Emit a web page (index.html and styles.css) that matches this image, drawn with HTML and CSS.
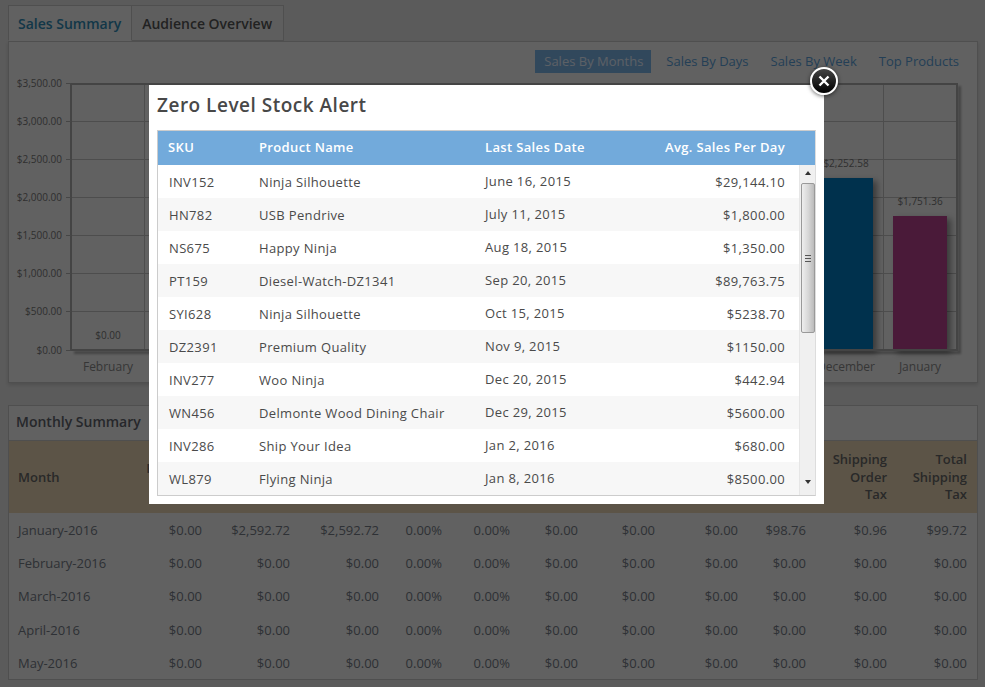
FILE: index.html
```html
<!DOCTYPE html>
<html lang="en">
<head>
    <meta charset="UTF-8">
    <meta name="viewport" content="width=device-width, initial-scale=1.0">
    <title>Sales Dashboard</title>
    <link rel="stylesheet" href="styles.css">
</head>
<body>
    <!-- Tabs -->
    <ul class="tabs">
        <li class="tab active">Sales Summary</li>
        <li class="tab">Audience Overview</li>
    </ul>

    <!-- Chart panel -->
    <section class="chart-panel">
        <nav class="chart-nav">
            <a class="chart-link active">Sales By Months</a>
            <a class="chart-link">Sales By Days</a>
            <a class="chart-link">Sales By Week</a>
            <a class="chart-link">Top Products</a>
        </nav>
        <svg class="chart" viewBox="9 74 968 308" width="968" height="308">
            <g class="grid">
                <path d="M71 121.5H957M71 159.5H957M71 197.5H957M71 235.5H957M71 273.5H957M71 311.5H957"/>
                <path d="M144.5 83V350M218.5 83V350M292.5 83V350M366.5 83V350M440.5 83V350M514.5 83V350M587.5 83V350M661.5 83V350M735.5 83V350M809.5 83V350M883.5 83V350"/>
            </g>
            <rect class="bar bar-blue" x="819" y="178" width="54" height="172"/>
            <rect class="bar bar-purple" x="893" y="216" width="54" height="134"/>
            <path class="axis-shadow" d="M959.5 86V352.5H74"/>
            <path class="axis" d="M71 350V84H957V350Z"/>
            <path class="ticks" d="M66 83.5H71M66 121.5H71M66 159.5H71M66 197.5H71M66 235.5H71M66 273.5H71M66 311.5H71M66 350.5H71"/>
            <g class="y-labels">
                <text x="62" y="87">$3,500.00</text>
                <text x="62" y="125">$3,000.00</text>
                <text x="62" y="163">$2,500.00</text>
                <text x="62" y="201">$2,000.00</text>
                <text x="62" y="239">$1,500.00</text>
                <text x="62" y="277">$1,000.00</text>
                <text x="62" y="315">$500.00</text>
                <text x="62" y="354">$0.00</text>
            </g>
            <g class="bar-labels">
                <text x="108" y="339">$0.00</text>
                <text x="846" y="167">$2,252.58</text>
                <text x="920" y="205">$1,751.36</text>
            </g>
            <g class="x-labels">
                <text x="108" y="371">February</text>
                <text x="846" y="371">December</text>
                <text x="920" y="371">January</text>
            </g>
        </svg>
    </section>

    <!-- Monthly summary -->
    <section class="summary-panel">
        <h2 class="summary-title">Monthly Summary</h2>
        <table class="summary-table">
            <colgroup>
                <col class="col-month"><col class="col-a"><col class="col-b"><col class="col-b2">
                <col class="col-pct"><col class="col-c"><col class="col-c"><col class="col-d">
                <col class="col-e"><col class="col-c"><col class="col-f"><col class="col-g">
            </colgroup>
            <thead>
                <tr>
                    <th class="left">Month</th>
                    <th>Products<br>Sold</th>
                    <th></th><th></th><th></th><th></th><th></th><th></th><th></th><th></th>
                    <th>Shipping<br>Order<br>Tax</th>
                    <th>Total<br>Shipping<br>Tax</th>
                </tr>
            </thead>
            <tbody>
                <tr><td class="left">January-2016</td><td>$0.00</td><td>$2,592.72</td><td>$2,592.72</td><td>0.00%</td><td>0.00%</td><td>$0.00</td><td>$0.00</td><td>$0.00</td><td>$98.76</td><td>$0.96</td><td>$99.72</td></tr>
                <tr><td class="left">February-2016</td><td>$0.00</td><td>$0.00</td><td>$0.00</td><td>0.00%</td><td>0.00%</td><td>$0.00</td><td>$0.00</td><td>$0.00</td><td>$0.00</td><td>$0.00</td><td>$0.00</td></tr>
                <tr><td class="left">March-2016</td><td>$0.00</td><td>$0.00</td><td>$0.00</td><td>0.00%</td><td>0.00%</td><td>$0.00</td><td>$0.00</td><td>$0.00</td><td>$0.00</td><td>$0.00</td><td>$0.00</td></tr>
                <tr><td class="left">April-2016</td><td>$0.00</td><td>$0.00</td><td>$0.00</td><td>0.00%</td><td>0.00%</td><td>$0.00</td><td>$0.00</td><td>$0.00</td><td>$0.00</td><td>$0.00</td><td>$0.00</td></tr>
                <tr class="last-row"><td class="left">May-2016</td><td>$0.00</td><td>$0.00</td><td>$0.00</td><td>0.00%</td><td>0.00%</td><td>$0.00</td><td>$0.00</td><td>$0.00</td><td>$0.00</td><td>$0.00</td><td>$0.00</td></tr>
            </tbody>
        </table>
    </section>

    <!-- Dimmed backdrop and modal -->
    <div class="overlay"></div>
    <div class="modal">
        <button class="modal-close" aria-label="Close">
            <svg viewBox="0 0 12 12" width="12" height="12"><path d="M1.5 1.5L10.5 10.5M10.5 1.5L1.5 10.5"/></svg>
        </button>
        <h3 class="modal-title">Zero Level Stock Alert</h3>
        <div class="stock-box">
            <table class="stock-table stock-head">
                <thead>
                    <tr>
                        <th class="col-sku">SKU</th>
                        <th class="col-name">Product Name</th>
                        <th class="col-date">Last Sales Date</th>
                        <th class="col-avg">Avg. Sales Per Day</th>
                    </tr>
                </thead>
            </table>
            <div class="stock-body">
                <table class="stock-table">
                    <tbody>
                        <tr><td class="col-sku">INV152</td><td class="col-name">Ninja Silhouette</td><td class="col-date">June 16, 2015</td><td class="col-avg">$29,144.10</td></tr>
                        <tr><td class="col-sku">HN782</td><td class="col-name">USB Pendrive</td><td class="col-date">July 11, 2015</td><td class="col-avg">$1,800.00</td></tr>
                        <tr><td class="col-sku">NS675</td><td class="col-name">Happy Ninja</td><td class="col-date">Aug 18, 2015</td><td class="col-avg">$1,350.00</td></tr>
                        <tr><td class="col-sku">PT159</td><td class="col-name">Diesel-Watch-DZ1341</td><td class="col-date">Sep 20, 2015</td><td class="col-avg">$89,763.75</td></tr>
                        <tr><td class="col-sku">SYI628</td><td class="col-name">Ninja Silhouette</td><td class="col-date">Oct 15, 2015</td><td class="col-avg">$5238.70</td></tr>
                        <tr><td class="col-sku">DZ2391</td><td class="col-name">Premium Quality</td><td class="col-date">Nov 9, 2015</td><td class="col-avg">$1150.00</td></tr>
                        <tr><td class="col-sku">INV277</td><td class="col-name">Woo Ninja</td><td class="col-date">Dec 20, 2015</td><td class="col-avg">$442.94</td></tr>
                        <tr><td class="col-sku">WN456</td><td class="col-name">Delmonte Wood Dining Chair</td><td class="col-date">Dec 29, 2015</td><td class="col-avg">$5600.00</td></tr>
                        <tr><td class="col-sku">INV286</td><td class="col-name">Ship Your Idea</td><td class="col-date">Jan 2, 2016</td><td class="col-avg">$680.00</td></tr>
                        <tr><td class="col-sku">WL879</td><td class="col-name">Flying Ninja</td><td class="col-date">Jan 8, 2016</td><td class="col-avg">$8500.00</td></tr>
                    </tbody>
                </table>
                <div class="scrollbar">
                    <span class="arrow arrow-up"></span>
                    <div class="thumb"><span class="grip"></span></div>
                    <span class="arrow arrow-down"></span>
                </div>
            </div>
        </div>
    </div>
</body>
</html>
```

FILE: styles.css
```css
/* Page */
html, body {
    height: 687px;
    overflow: hidden;
}

body {
    margin: 0;
    padding: 5px 7px 0 8px;
    background-color: #e4e4e4;
    font-family: "Open Sans", sans-serif;
    color: #333;
}

/* Tabs */
.tabs {
    display: flex;
    list-style: none;
    margin: 0;
    padding: 0;
    height: 36px;
}

.tab {
    padding: 0 11px 0 10px;
    border: 1px solid #c6c6c6;
    border-left: none;
    font-size: 14px;
    font-weight: 600;
    line-height: 36px;
    color: #555;
    background-color: #ececec;
}

.tab.active {
    padding: 0 10px 0 9px;
    border-left: 1px solid #c6c6c6;
    border-bottom-color: #f2f2f2;
    background-color: #f2f2f2;
    color: #2f8ab4;
}

/* Chart panel */
.chart-panel {
    height: 342px;
    box-sizing: border-box;
    border: 1px solid #c6c6c6;
    background-color: #f2f2f2;
    box-shadow: 0 2px 4px rgba(0, 0, 0, 0.15);
}

.chart-nav {
    display: flex;
    justify-content: flex-end;
    gap: 6px;
    height: 32px;
    padding: 8px 10px 0 0;
    box-sizing: border-box;
}

.chart-link {
    padding: 0 8px;
    height: 23px;
    font-size: 13px;
    line-height: 23px;
    color: #5a9fd8;
}

.chart-link.active {
    margin-right: 1px;
    padding-left: 9px;
    background-color: #7ab4e6;
    color: #e5f0ff;
}

.chart {
    display: block;
}

.grid path {
    fill: none;
    stroke: #c0c0c0;
    stroke-width: 1;
}

.axis {
    fill: none;
    stroke: #aaa;
    stroke-width: 2;
}

.axis-shadow {
    fill: none;
    stroke: rgba(0, 0, 0, 0.3);
    stroke-width: 3;
    filter: blur(1px);
}

.ticks {
    stroke: #b0b0b0;
    stroke-width: 1;
}

.bar {
    filter: drop-shadow(4px 3px 3px rgba(0, 0, 0, 0.4));
}

.bar-blue {
    fill: #007ac1;
}

.bar-purple {
    fill: #b9418f;
}

.y-labels text {
    font-size: 10px;
    text-anchor: end;
    fill: #777;
}

.bar-labels text {
    font-size: 10px;
    text-anchor: middle;
    fill: #777;
}

.x-labels text {
    font-size: 12px;
    text-anchor: middle;
    fill: #888;
}

/* Monthly summary */
.summary-panel {
    margin-top: 22px;
    border: 1px solid #c6c6c6;
    background-color: #f2f2f2;
}

.summary-title {
    margin: 0;
    padding: 0 7px;
    height: 34px;
    font-size: 14px;
    font-weight: 600;
    line-height: 31px;
    color: #5f636b;
    border-bottom: 1px solid #c6c6c6;
}

.summary-table {
    width: 100%;
    table-layout: fixed;
    border-collapse: collapse;
    font-size: 13px;
}

.col-month { width: 133px; }
.col-a { width: 70px; }
.col-b { width: 88px; }
.col-b2 { width: 89px; }
.col-pct { width: 63px; }
.col-c { width: 68px; }
.col-d { width: 77px; }
.col-e { width: 83px; }
.col-f { width: 81px; }
.col-g { width: 80px; }

.summary-table th {
    height: 72px;
    box-sizing: border-box;
    padding: 1px 10px 0 0;
    background-color: #e6d3b2;
    font-weight: 600;
    line-height: 17.5px;
    text-align: right;
    color: #666;
}

.summary-table td {
    height: 33.4px;
    padding: 0 10px 0 0;
    text-align: right;
    color: #747a85;
}

.summary-table .last-row td {
    height: 31px;
    padding-top: 1px;
}

.summary-table .left {
    padding-left: 9px;
    text-align: left;
}

/* Backdrop */
.overlay {
    position: fixed;
    inset: 0;
    background-color: rgba(0, 0, 0, 0.6);
}

/* Modal */
.modal {
    position: fixed;
    left: 149px;
    top: 85px;
    width: 675px;
    height: 419px;
    box-sizing: border-box;
    padding: 0 8px;
    background-color: #fff;
}

.modal-close {
    position: absolute;
    top: -18px;
    right: -14px;
    width: 28px;
    height: 28px;
    display: flex;
    align-items: center;
    justify-content: center;
    padding: 0;
    border: 2px solid #fff;
    border-radius: 50%;
    background: linear-gradient(#444, #000);
    box-shadow: 0 1px 4px rgba(0, 0, 0, 0.6);
}

.modal-close path {
    fill: none;
    stroke: #fff;
    stroke-width: 2.4;
}

.modal-title {
    margin: 0;
    height: 45px;
    font-size: 19px;
    font-weight: 600;
    line-height: 41px;
    letter-spacing: 0.5px;
    color: #484848;
}

.stock-box {
    border: 1px solid #ccc;
    border-right-color: #ddd;
    height: 366px;
    box-sizing: border-box;
}

.stock-table {
    width: 642px;
    table-layout: fixed;
    border-collapse: collapse;
    font-size: 13px;
    color: #4a4a4a;
}

.stock-head {
    width: 100%;
    background-color: #72aadb;
    color: #fff;
}

.stock-head th {
    height: 34px;
    padding: 0 0 2px;
    box-sizing: border-box;
    font-weight: 600;
    text-align: left;
    letter-spacing: 0.35px;
}

.stock-table td {
    height: 33px;
    box-sizing: border-box;
    padding: 0;
    letter-spacing: 0.35px;
}

.stock-table tbody tr:nth-child(even) {
    background-color: #f7f7f7;
}

.stock-table td.col-date {
    padding-bottom: 2px;
}

.stock-table .col-sku { width: 101px; padding-left: 11px; box-sizing: border-box; }
.col-name { width: 226px; }
.col-date { width: 170px; }
.stock-table .col-avg { text-align: right; padding-right: 14px; }
.stock-head .col-sku { padding-left: 10px; }
.stock-head .col-avg { padding-right: 30px; }

.stock-body {
    display: flex;
}

/* Scrollbar */
.scrollbar {
    width: 16px;
    height: 330px;
    box-sizing: border-box;
    display: flex;
    flex-direction: column;
    align-items: center;
    background-color: #f0f0f0;
    border-left: 1px solid #e6e6e6;
}

.arrow {
    width: 0;
    height: 0;
    border-left: 3.5px solid transparent;
    border-right: 3.5px solid transparent;
}

.arrow-up {
    margin-top: 6px;
    border-bottom: 4px solid #333;
}

.arrow-down {
    margin-top: 147px;
    border-top: 4px solid #333;
}

.thumb {
    width: 14px;
    height: 150px;
    margin-top: 8px;
    box-sizing: border-box;
    display: flex;
    align-items: center;
    justify-content: center;
    border: 1px solid #999;
    border-radius: 2px;
    background: linear-gradient(to right, #eee, #d8d8d8 50%, #bbb);
}

.grip {
    width: 6px;
    height: 5px;
    border-top: 1px solid #555;
    border-bottom: 1px solid #555;
    background: linear-gradient(#555, #555) center / 100% 1px no-repeat;
}
```
